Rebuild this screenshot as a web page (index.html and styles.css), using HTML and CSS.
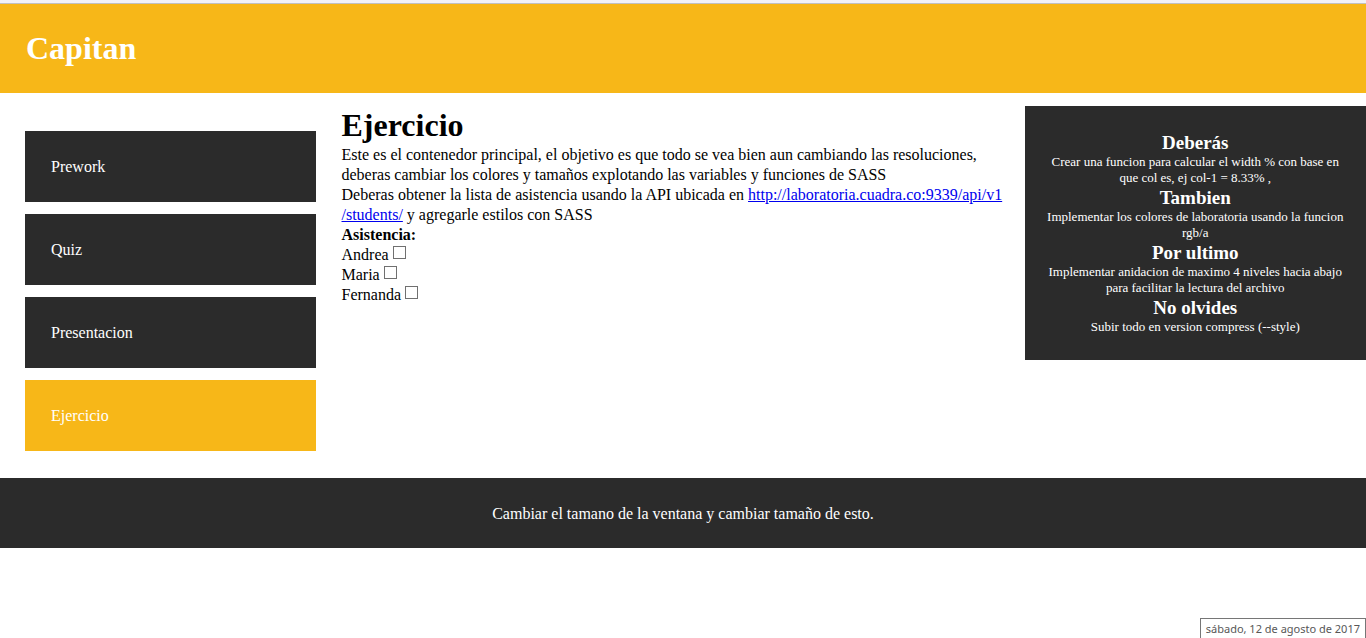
FILE: index.html
```html
<!DOCTYPE html>
<html lang="es">
<head>
<meta charset="utf-8">
<title>Capitan</title>
<link rel="stylesheet" href="styles.css">
</head>
<body>
<header class="header"><h1 class="title">Capitan</h1></header>
<div class="columns">
  <nav class="menu">
    <a class="menu-item" href="#prework">Prework</a>
    <a class="menu-item" href="#quiz">Quiz</a>
    <a class="menu-item" href="#presentacion">Presentacion</a>
    <a class="menu-item menu-item-active" href="#ejercicio">Ejercicio</a>
  </nav>
  <main class="content">
    <h1 class="title">Ejercicio</h1>
    <p>Este es el contenedor principal, el objetivo es que todo se vea bien aun cambiando las resoluciones, deberas cambiar los colores y tamaños explotando las variables y funciones de SASS</p>
    <p>Deberas obtener la lista de asistencia usando la API ubicada en <a class="link" href="http://laboratoria.cuadra.co:9339/api/v1/students/">http://laboratoria.cuadra.co:9339/api/v1<wbr>/students/</a> y agregarle estilos con SASS</p>
    <h2 class="list-title">Asistencia:</h2>
    <ul class="students">
      <li class="student"><label for="andrea">Andrea</label><input class="check" type="checkbox" id="andrea"></li>
      <li class="student"><label for="maria">Maria</label><input class="check" type="checkbox" id="maria"></li>
      <li class="student"><label for="fernanda">Fernanda</label><input class="check" type="checkbox" id="fernanda"></li>
    </ul>
  </main>
  <aside class="notes">
    <h3 class="note-title">Deberás</h3>
    <p>Crear una funcion para calcular el width % con base en que col es, ej col-1 = 8.33% ,</p>
    <h3 class="note-title">Tambien</h3>
    <p>Implementar los colores de laboratoria usando la funcion rgb/a</p>
    <h3 class="note-title">Por ultimo</h3>
    <p>Implementar anidacion de maximo 4 niveles hacia abajo para facilitar la lectura del archivo</p>
    <h3 class="note-title">No olvides</h3>
    <p>Subir todo en version compress (--style)</p>
  </aside>
</div>
<footer class="footer">Cambiar el tamano de la ventana y cambiar tamaño de esto.</footer>
<div class="date-tip">sábado, 12 de agosto de 2017</div>
</body>
</html>
```
FILE: styles.css
```css
* {
  box-sizing: border-box;
  margin: 0;
  padding: 0;
}

body {
  border-top: 3px solid #f2f2f6;
  background: #fff;
  color: #000;
  font: 16px/20px "Liberation Serif", "Times New Roman", serif;
}

.header {
  padding: 25px 26px;
  border-top: 1px solid #c0c0c0;
  background: #f7b718;
  color: #fff;
}

.title {
  font-size: 32px;
  line-height: 39px;
}

.columns {
  display: grid;
  grid-template-columns: 1fr 2fr 1fr;
  align-items: start;
  padding: 13px 0 27px;
}

.menu {
  display: flex;
  flex-direction: column;
  gap: 12px;
  padding: 25px 26px 0 25px;
}

.menu-item {
  padding: 26px 26px 25px;
  background: #2b2b2b;
  color: #fff;
  text-decoration: none;
}

.menu-item-active {
  background: #f7b718;
}

.content {
  padding-right: 16px;
}

.link {
  color: #00e;
}

.list-title {
  font-size: 16px;
}

.students {
  list-style: none;
}

.student {
  display: flex;
  align-items: flex-start;
  gap: 4px;
}

.check {
  appearance: none;
  width: 13px;
  height: 13px;
  margin-top: 1px;
  border: 1px solid #707070;
  background: #fff;
}

.check:checked {
  background: #707070;
}

.notes {
  padding: 25px 20px;
  background: #2b2b2b;
  color: #fff;
  font-size: 13px;
  line-height: 16px;
  text-align: center;
}

.note-title {
  font-size: 19px;
  line-height: 23px;
}

.footer {
  padding: 26px 25px 24px;
  background: #2b2b2b;
  color: #fff;
  text-align: center;
}

.date-tip {
  position: fixed;
  right: 0;
  bottom: 0;
  padding: 0 5px;
  border: 1px solid #767676;
  border-bottom: 0;
  background: #fff;
  color: #575757;
  font: 11px/19px "Noto Sans", "Open Sans", sans-serif;
}
```
